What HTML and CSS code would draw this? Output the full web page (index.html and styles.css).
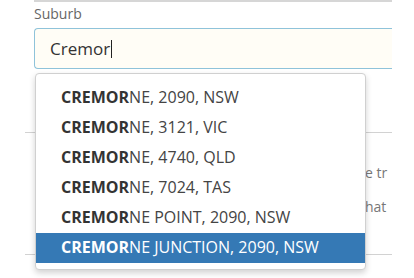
FILE: index.html
```html
<!DOCTYPE html>
<html lang="en">
<head>
    <meta charset="UTF-8">
    <meta name="viewport" content="width=device-width, initial-scale=1.0">
    <title>Suburb Lookup</title>
    <link rel="stylesheet" href="styles.css">
</head>
<body>
    <div class="form">
        <div class="prev-field"></div>
        <div class="field">
            <label class="label" for="suburb">Suburb</label>
            <div class="input-box">
                <span class="input-text">Cremor</span><span class="caret"></span>
            </div>
        </div>
        <div class="section">
            <div class="rule"></div>
            <div class="notes">
                <p class="note first">e tr</p>
                <p class="note">hat</p>
            </div>
            <div class="rule second"></div>
        </div>

        <ul class="suggestions">
            <li><b>CREMOR</b>NE, 2090, NSW</li>
            <li><b>CREMOR</b>NE, 3121, VIC</li>
            <li><b>CREMOR</b>NE, 4740, QLD</li>
            <li><b>CREMOR</b>NE, 7024, TAS</li>
            <li><b>CREMOR</b>NE POINT, 2090, NSW</li>
            <li class="active"><b>CREMOR</b>NE JUNCTION, 2090, NSW</li>
        </ul>
    </div>
</body>
</html>
```

FILE: styles.css
```css
body {
    margin: 0;
    font-family: "Open Sans", Arial, sans-serif;
    background-color: #fff;
    color: #333;
}
.form {
    position: relative;
    width: 367px;
    margin-left: 25px;
    height: 278px;
    overflow: hidden;
}
.prev-field {
    margin-left: 9px;
    height: 0;
    border-bottom: 2px solid #d6d6d6;
}
.field {
    margin-left: 9px;
}
.label {
    display: block;
    margin-top: 3px;
    font-size: 14px;
    line-height: 18px;
    color: #666;
}
.input-box {
    display: flex;
    align-items: center;
    margin-top: 5px;
    width: 400px;
    height: 39px;
    border: 1px solid #8fc3da;
    border-right: none;
    border-radius: 4px 0 0 4px;
    background-color: #fffdf6;
    padding-left: 15px;
}
.input-text {
    font-size: 17px;
    color: #333;
}
.caret {
    display: inline-block;
    width: 1px;
    height: 18px;
    margin-left: 1px;
    background-color: #222;
}
.section {
    margin-top: 63px;
}
.rule {
    height: 1px;
    background-color: #d2d2d2;
}
.rule.second {
    margin-top: 30px;
}
.notes {
    margin-left: 340px;
}
.note {
    margin: 0;
    white-space: nowrap;
    font-size: 14px;
    line-height: 34px;
    color: #777;
}
.note.first {
    margin-top: 23px;
}
.suggestions {
    position: absolute;
    top: 73px;
    left: 10px;
    width: 329px;
    margin: 0;
    padding: 9px 0 6px;
    list-style: none;
    background-color: #fff;
    border: 1px solid #d0d0d0;
    border-radius: 4px;
    box-shadow: 0 3px 6px rgba(0, 0, 0, 0.18);
}
.suggestions li {
    height: 30px;
    line-height: 29px;
    padding-left: 25px;
    font-size: 16px;
    color: #444;
}
.suggestions b {
    font-weight: bold;
    color: #333;
}
.suggestions li.active {
    background-color: #3579b5;
    color: #fff;
}
.suggestions li.active b {
    color: #fff;
}
```
